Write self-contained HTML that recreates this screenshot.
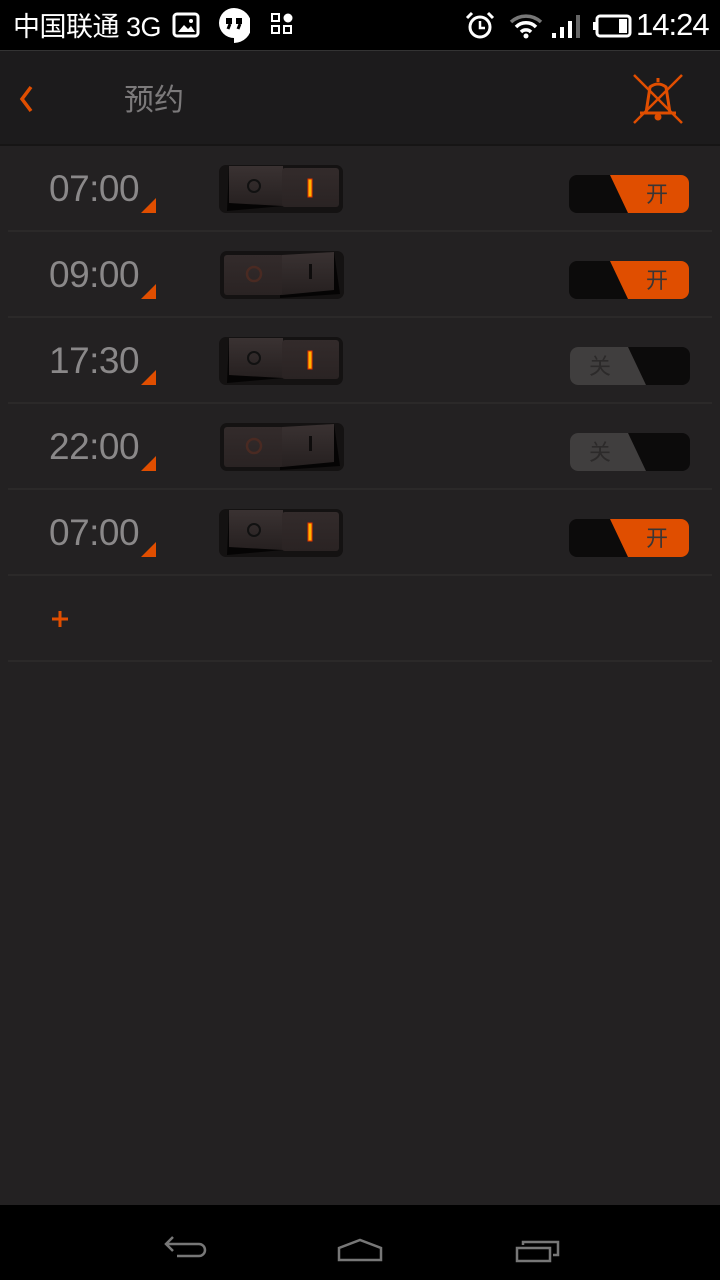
<!DOCTYPE html>
<html><head><meta charset="utf-8"><style>
*{margin:0;padding:0;box-sizing:border-box}
body{width:720px;height:1280px;background:#232122;font-family:"Liberation Sans","Noto Sans CJK SC",sans-serif;position:relative;overflow:hidden}
.abs{position:absolute}
#sb{left:0;top:0;width:720px;height:50px;background:#000;color:#fff}
#hd{left:0;top:50px;width:720px;height:96px;background:#1c1b1c;border-top:1px solid #333;border-bottom:2px solid #161515}
.sep{position:absolute;left:8px;width:704px;height:2px;background:#2b2929}
.time{position:absolute;left:49px;font-size:37px;color:#8a8889;width:92px;letter-spacing:-0.5px}
.tri{position:absolute;left:141px;width:0;height:0;border-left:15px solid transparent;border-bottom:15px solid #e04e00}
.tg{position:absolute;left:569px;width:120px;height:38px;border-radius:8px;overflow:hidden;background:#0c0b0b}
.tg span{position:absolute;font-size:22px;top:2px;color:#3a3535}
#nav{left:0;top:1205px;width:720px;height:75px;background:#000}
</style></head><body>
<div id="sb" class="abs">
<div class="abs" style="left:13px;top:5px;font-size:27px;letter-spacing:-0.5px">中国联通 3G</div>
<svg class="abs" style="left:172px;top:12px" width="28" height="26"><rect x="2" y="2" width="24" height="22" rx="3" fill="none" stroke="#fff" stroke-width="3"/><path d="M6 20l6-7 4 4 3-3 4 6z" fill="#fff"/><circle cx="19" cy="9" r="2" fill="#fff"/></svg>
<svg class="abs" style="left:218px;top:7px" width="32" height="36"><path d="M16 1a15 15 0 0 0-15 15a15 15 0 0 0 15 15v5a15 15 0 0 0 0-35z" fill="#fff"/><rect x="8" y="11" width="6" height="6" fill="#000"/><rect x="18" y="11" width="6" height="6" fill="#000"/><path d="M12 17l-2 5M22 17l-2 5" stroke="#000" stroke-width="3"/></svg>
<svg class="abs" style="left:271px;top:13px" width="22" height="22"><rect x="1" y="1" width="7" height="7" fill="none" stroke="#fff" stroke-width="2"/><circle cx="17" cy="5" r="4.5" fill="#fff"/><rect x="1" y="13" width="7" height="7" fill="none" stroke="#fff" stroke-width="2"/><rect x="13" y="13" width="7" height="7" fill="none" stroke="#fff" stroke-width="2"/></svg>
<svg class="abs" style="left:465px;top:11px" width="30" height="30"><circle cx="15" cy="16" r="10" fill="none" stroke="#fff" stroke-width="3"/><path d="M15 10v7h5" stroke="#fff" stroke-width="2.5" fill="none"/><path d="M2 7l5-5M28 7l-5-5" stroke="#fff" stroke-width="3"/></svg>
<svg class="abs" style="left:509px;top:13px" width="34" height="26"><path d="M2 9a22 22 0 0 1 30 0" stroke="#777" stroke-width="3.5" fill="none"/><path d="M7 14a14 14 0 0 1 20 0" stroke="#fff" stroke-width="3.5" fill="none"/><path d="M12 19a7 7 0 0 1 10 0" stroke="#fff" stroke-width="3.5" fill="none"/><circle cx="17" cy="23" r="2.5" fill="#fff"/></svg>
<svg class="abs" style="left:551px;top:13px" width="30" height="26"><rect x="1" y="20" width="4" height="5" fill="#fff"/><rect x="9" y="14" width="4" height="11" fill="#fff"/><rect x="17" y="8" width="4" height="17" fill="#fff"/><rect x="25" y="2" width="4" height="23" fill="#666"/></svg>
<svg class="abs" style="left:592px;top:14px" width="40" height="24"><rect x="5" y="2" width="33" height="20" rx="3" fill="none" stroke="#fff" stroke-width="3"/><rect x="1" y="8" width="4" height="8" fill="#fff"/><rect x="27" y="5" width="8" height="14" fill="#fff"/></svg>
<div class="abs" style="left:636px;top:7px;font-size:31px;letter-spacing:-1px">14:24</div>
</div>
<div id="hd" class="abs">
<svg class="abs" style="left:18px;top:34px" width="16" height="28"><path d="M13 2L4 14l9 12" stroke="#e04e00" stroke-width="3.5" fill="none"/></svg>
<div class="abs" style="left:124px;top:24px;font-size:30px;color:#7c7a7b">预约</div>
<svg class="abs" style="left:632px;top:22px" width="52" height="52"><path d="M2 2l48 48M50 2L2 50" stroke="#e04e00" stroke-width="2.5"/><path d="M26 5v4M18 14q8-6 16 0l4 26H14z" stroke="#e04e00" stroke-width="3" fill="none"/><path d="M8 40h36" stroke="#e04e00" stroke-width="3"/><circle cx="26" cy="44" r="3.5" fill="#e04e00"/></svg>
</div>

<div class="sep" style="top:230px"></div><div class="sep" style="top:316px"></div><div class="sep" style="top:402px"></div><div class="sep" style="top:488px"></div><div class="sep" style="top:574px"></div><div class="sep" style="top:660px"></div>

<div class="time" style="top:168px">07:00</div><div class="tri" style="top:198px"></div>
<div class="time" style="top:254px">09:00</div><div class="tri" style="top:284px"></div>
<div class="time" style="top:340px">17:30</div><div class="tri" style="top:370px"></div>
<div class="time" style="top:426px">22:00</div><div class="tri" style="top:456px"></div>
<div class="time" style="top:512px">07:00</div><div class="tri" style="top:542px"></div>

<svg width="0" height="0" style="position:absolute"><defs>
<linearGradient id="gl" x1="0" y1="0" x2="0" y2="1"><stop offset="0" stop-color="#3a3232"/><stop offset="1" stop-color="#262020"/></linearGradient>
<linearGradient id="gr" x1="0" y1="0" x2="0" y2="1"><stop offset="0" stop-color="#332b2b"/><stop offset="1" stop-color="#2a2323"/></linearGradient>
<g id="on"><rect x="0" y="0" width="124" height="48" rx="7" fill="#141212"/><path d="M10 1l54 4v36l-56 5z" fill="#050404"/><path d="M10 1h54v40l-54-3z" fill="url(#gl)"/><rect x="63" y="3" width="57" height="39" rx="3" fill="url(#gr)"/><circle cx="35" cy="21" r="6" fill="none" stroke="#111" stroke-width="2"/><rect x="89" y="14" width="4" height="18" fill="#ffb300" stroke="#e03000" stroke-width="1"/></g>
<g id="off"><rect x="0" y="0" width="124" height="48" rx="7" fill="#141212"/><path d="M60 5l54-4 6 42-60 4z" fill="#050404"/><rect x="4" y="4" width="60" height="40" rx="3" fill="url(#gr)"/><path d="M62 4l52-3v38l-52 5z" fill="url(#gl)"/><circle cx="34" cy="23" r="7" fill="none" stroke="#4a2a22" stroke-width="2.5"/><rect x="89" y="13" width="3" height="15" fill="#0e0c0c"/></g>
</defs></svg>
<svg class="abs" style="left:219px;top:165px" width="124" height="48"><use href="#on"/></svg>
<svg class="abs" style="left:220px;top:251px" width="124" height="48"><use href="#off"/></svg>
<svg class="abs" style="left:219px;top:337px" width="124" height="48"><use href="#on"/></svg>
<svg class="abs" style="left:220px;top:423px" width="124" height="48"><use href="#off"/></svg>
<svg class="abs" style="left:219px;top:509px" width="124" height="48"><use href="#on"/></svg>

<div class="tg" style="top:175px"><svg class="abs" width="120" height="38"><path d="M41 0h79v38H59z" fill="#e04e00"/></svg><span style="left:77px">开</span></div>
<div class="tg" style="top:261px"><svg class="abs" width="120" height="38"><path d="M41 0h79v38H59z" fill="#e04e00"/></svg><span style="left:77px">开</span></div>
<div class="tg" style="top:347px;left:570px"><svg class="abs" width="120" height="38"><path d="M0 0h58l18 38H0z" fill="#403e3e"/></svg><span style="left:19px;color:#2c2a2a">关</span></div>
<div class="tg" style="top:433px;left:570px"><svg class="abs" width="120" height="38"><path d="M0 0h58l18 38H0z" fill="#403e3e"/></svg><span style="left:19px;color:#2c2a2a">关</span></div>
<div class="tg" style="top:519px"><svg class="abs" width="120" height="38"><path d="M41 0h79v38H59z" fill="#e04e00"/></svg><span style="left:77px">开</span></div>

<svg class="abs" style="left:50px;top:609px" width="20" height="20"><path d="M10 2v16M2 10h16" stroke="#e04e00" stroke-width="3"/></svg>

<div id="nav" class="abs">
<svg class="abs" style="left:163px;top:30px" width="44" height="24"><path d="M10 2L3 9l7 7M3 9h33a6 6 0 0 1 0 12H14" stroke="#777" stroke-width="2.5" fill="none"/></svg>
<svg class="abs" style="left:337px;top:33px" width="46" height="24"><path d="M2 22V10L23 2l21 8v12z" stroke="#777" stroke-width="2.5" fill="none"/></svg>
<svg class="abs" style="left:515px;top:34px" width="46" height="24"><rect x="2" y="9" width="33" height="13" stroke="#777" stroke-width="2.5" fill="none"/><path d="M8 6V3h35v13h-5" stroke="#777" stroke-width="2.5" fill="none"/></svg>
</div>
</body></html>
